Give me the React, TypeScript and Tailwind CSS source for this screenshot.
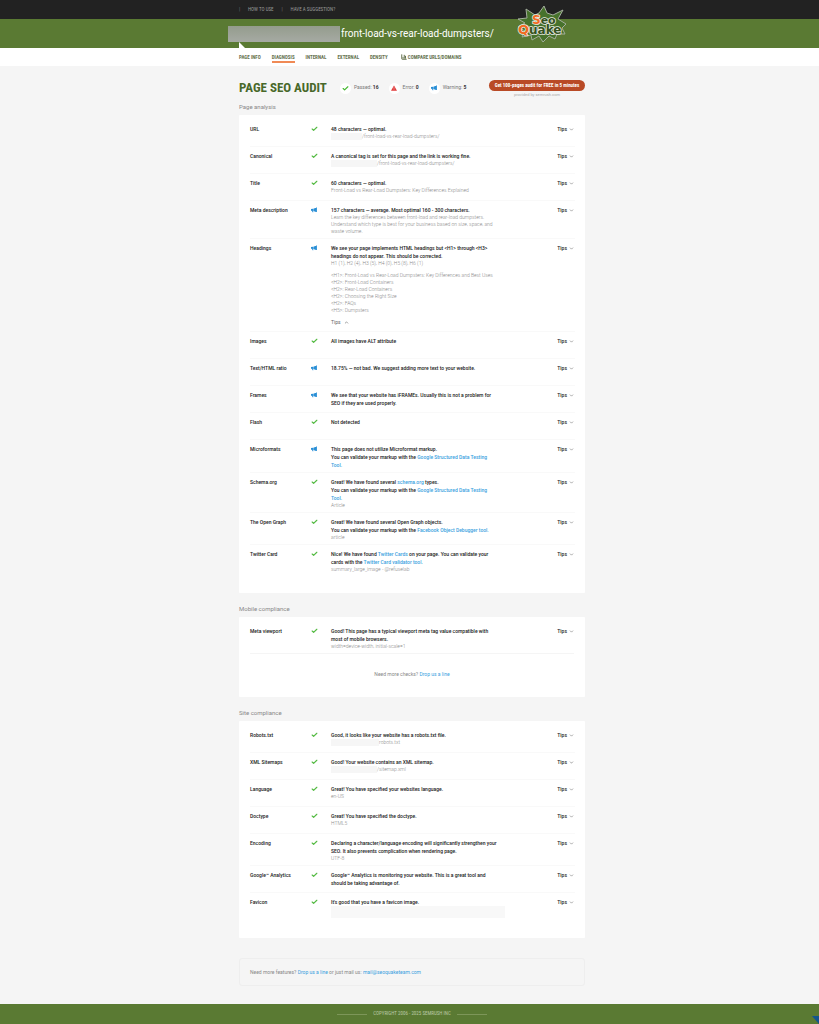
import type { ReactNode } from "react";
import { BarChart3, Check, ChevronDown, ChevronUp } from "lucide-react";

type Status = "pass" | "warning";

interface AuditItem {
  name: string;
  status: Status;
  message: ReactNode;
  details?: ReactNode;
}

const NAV = ["Page info", "Diagnosis", "Internal", "External", "Density"];

function Megaphone({ className }: { className: string }) {
  return (
    <svg viewBox="0 0 12 10" className={className} fill="#2a8fd6" aria-hidden="true">
      <path d="M0 3 L4 2.4 V7 L0 6.4 Z M4.6 2.6 L10 0.4 V8.8 L4.6 7 Z M10 0.2 H11.8 V9 H10 Z M2 7 H4.2 L4.8 9.6 H3 Z" />
    </svg>
  );
}

function StatusIcon({ status }: { status: Status }) {
  if (status === "pass") {
    return <Check className="w-[7px] h-2 text-[#55bb44]" strokeWidth={4} />;
  }
  return <Megaphone className="w-[6px] h-2" />;
}

function Blue({ children }: { children: ReactNode }) {
  return (
    <a href="#" className="text-[#3b9fe0]">
      {children}
    </a>
  );
}

// Hidden part of an address
function Mask({ className }: { className: string }) {
  return <span className={`inline-block h-[7px] align-top bg-[#f6f6f6] ${className}`} />;
}

const PAGE_ITEMS: AuditItem[] = [
  {
    name: "URL",
    status: "pass",
    message: "48 characters — optimal.",
    details: (
      <>
        <Mask className="w-[31px]" />
        /front-load-vs-rear-load-dumpsters/
      </>
    ),
  },
  {
    name: "Canonical",
    status: "pass",
    message: "A canonical tag is set for this page and the link is working fine.",
    details: (
      <>
        <Mask className="w-[46px]" />
        /front-load-vs-rear-load-dumpsters/
      </>
    ),
  },
  {
    name: "Title",
    status: "pass",
    message: "60 characters — optimal.",
    details: "Front-Load vs Rear-Load Dumpsters: Key Differences Explained",
  },
  {
    name: "Meta description",
    status: "warning",
    message: "157 characters — average. Most optimal 160 - 300 characters.",
    details: (
      <>
        Learn the key differences between front-load and rear-load dumpsters.
        <br />
        Understand which type is best for your business based on size, space, and
        <br />
        waste volume.
      </>
    ),
  },
  {
    name: "Headings",
    status: "warning",
    message: (
      <>
        We see your page implements HTML headings but &lt;H1&gt; through &lt;H3&gt;
        <br />
        headings do not appear. This should be corrected.
      </>
    ),
    details: (
      <>
        <p>H1 (1), H2 (4), H3 (5), H4 (0), H5 (8), H6 (1)</p>
        <ul className="mt-[5px]">
          <li>&lt;H1&gt;: Front-Load vs Rear-Load Dumpsters: Key Differences and Best Uses</li>
          <li>&lt;H2&gt;: Front-Load Containers</li>
          <li>&lt;H2&gt;: Rear-Load Containers</li>
          <li>&lt;H2&gt;: Choosing the Right Size</li>
          <li>&lt;H2&gt;: FAQs</li>
          <li>&lt;H5&gt;: Dumpsters</li>
        </ul>
        <button className="flex items-center gap-[3px] mt-1 mb-[2px] text-[5px] leading-2 font-normal text-[#666]">
          Tips
          <ChevronUp className="w-[5px] h-[5px]" strokeWidth={3} />
        </button>
      </>
    ),
  },
  { name: "Images", status: "pass", message: "All images have ALT attribute" },
  {
    name: "Text/HTML ratio",
    status: "warning",
    message: "18.75% — not bad. We suggest adding more text to your website.",
  },
  {
    name: "Frames",
    status: "warning",
    message: (
      <>
        We see that your website has iFRAMEs. Usually this is not a problem for
        <br />
        SEO if they are used properly.
      </>
    ),
  },
  { name: "Flash", status: "pass", message: "Not detected" },
  {
    name: "Microformats",
    status: "warning",
    message: (
      <>
        This page does not utilize Microformat markup.
        <br />
        You can validate your markup with the{" "}
        <Blue>
          Google Structured Data Testing
          <br />
          Tool.
        </Blue>
      </>
    ),
  },
  {
    name: "Schema.org",
    status: "pass",
    message: (
      <>
        Great! We have found several <Blue>schema.org</Blue> types.
        <br />
        You can validate your markup with the{" "}
        <Blue>
          Google Structured Data Testing
          <br />
          Tool.
        </Blue>
      </>
    ),
    details: "Article",
  },
  {
    name: "The Open Graph",
    status: "pass",
    message: (
      <>
        Great! We have found several Open Graph objects.
        <br />
        You can validate your markup with the <Blue>Facebook Object Debugger tool.</Blue>
      </>
    ),
    details: "article",
  },
  {
    name: "Twitter Card",
    status: "pass",
    message: (
      <>
        Nice! We have found <Blue>Twitter Cards</Blue> on your page. You can validate your
        <br />
        cards with the <Blue>Twitter Card validator tool.</Blue>
      </>
    ),
    details: "summary_large_image - @refuselab",
  },
];

const MOBILE_ITEMS: AuditItem[] = [
  {
    name: "Meta viewport",
    status: "pass",
    message: (
      <>
        Good! This page has a typical viewport meta tag value compatible with
        <br />
        most of mobile browsers.
      </>
    ),
    details: "width=device-width, initial-scale=1",
  },
];

const SITE_ITEMS: AuditItem[] = [
  {
    name: "Robots.txt",
    status: "pass",
    message: "Good, it looks like your website has a robots.txt file.",
    details: (
      <>
        <Mask className="w-12" />
        robots.txt
      </>
    ),
  },
  {
    name: "XML Sitemaps",
    status: "pass",
    message: "Good! Your website contains an XML sitemap.",
    details: (
      <>
        <Mask className="w-[46px]" />
        /sitemap.xml
      </>
    ),
  },
  {
    name: "Language",
    status: "pass",
    message: "Great! You have specified your websites language.",
    details: "en-US",
  },
  {
    name: "Doctype",
    status: "pass",
    message: "Great! You have specified the doctype.",
    details: "HTML5",
  },
  {
    name: "Encoding",
    status: "pass",
    message: (
      <>
        Declaring a character/language encoding will significantly strengthen your
        <br />
        SEO. It also prevents complication when rendering page.
      </>
    ),
    details: "UTF-8",
  },
  {
    name: "Google™ Analytics",
    status: "pass",
    message: (
      <>
        Google™ Analytics is monitoring your website. This is a great tool and
        <br />
        should be taking advantage of.
      </>
    ),
  },
  {
    name: "Favicon",
    status: "pass",
    message: "It's good that you have a favicon image.",
    details: <div className="h-3 w-[174px] bg-[#f8f8f8]" />,
  },
];

function AuditRow({ item }: { item: AuditItem }) {
  return (
    <li className="grid grid-cols-[61px_20px_1fr_auto] min-h-[27px] ml-[11px] mr-[10px] pt-[5px] pb-[3px] border-t border-[#f9f9f9] first:border-transparent text-[5px] leading-2 font-medium text-[#222]">
      <h3>{item.name}</h3>
      <StatusIcon status={item.status} />
      <div className="whitespace-nowrap">
        <p>{item.message}</p>
        {item.details && (
          <div className="text-[5px] leading-[7px] font-light text-[#888]">{item.details}</div>
        )}
      </div>
      <button className="flex items-center gap-[2px] self-start mr-px">
        Tips
        <ChevronDown className="w-[5px] h-[5px] text-[#777]" strokeWidth={3} />
      </button>
    </li>
  );
}

function AuditSection({
  title,
  items,
  children,
}: {
  title: string;
  items: AuditItem[];
  children?: ReactNode;
}) {
  return (
    <section className="mb-3">
      <h2 className="text-[6px] leading-2 pb-1 text-[#888]">{title}</h2>
      <div className="bg-white pt-1 pb-[17px] rounded-[1px]">
        <ul>
          {items.map((item) => (
            <AuditRow key={item.name} item={item} />
          ))}
        </ul>
        {children}
      </div>
    </section>
  );
}

function Logo() {
  return (
    <svg viewBox="0 0 50 38" className="w-[50px] h-[38px]" role="img" aria-label="SeoQuake">
      <path
        d="M9 4 L18 10 L22 8 L27 1 L30 8 L36 10 L46 5 L41 14 L49 19 L45 23 L48 29 L40 29 L38 34 L32 31 L26 37 L22 31 L15 35 L14 30 L5 32 L8 26 L1 22 L8 18 L1 14 L10 13 Z"
        fill="#47722c"
        stroke="#a3ad9c"
        strokeWidth="1"
        strokeLinejoin="round"
      />
      <g
        fontFamily="DejaVu Sans, sans-serif"
        fontWeight="700"
        fill="#35521f"
        stroke="#e9ebe2"
        strokeWidth="1.6"
        strokeLinejoin="round"
        paintOrder="stroke"
      >
        <text x="15" y="19" fontSize="11">
          <tspan fill="#f26a21" fontSize="12">S</tspan>eo
        </text>
        <text x="1" y="29" fontSize="12">
          <tspan fill="#f26a21" fontSize="13">Q</tspan>uake
        </text>
      </g>
    </svg>
  );
}

export default function App() {
  return (
    <div className="min-h-screen flex flex-col bg-[#f5f5f5] font-['Roboto',sans-serif]">
      <header>
        <div className="bg-[#222] h-[19px] pl-[5px]">
          <div className="max-w-[346px] mx-auto h-full flex items-center text-[5px] text-[#999] uppercase font-['Roboto_Condensed','Liberation_Sans_Narrow',sans-serif]">
            <span className="w-[9px] text-[#777]">|</span>
            <a href="#">How to use</a>
            <span className="w-[17px] text-center text-[#777]">|</span>
            <a href="#">Have a suggestion?</a>
          </div>
        </div>
        <div className="bg-[#5a7a33] h-[29px] pl-[5px]">
          <div className="relative max-w-[346px] mx-auto h-full flex items-center">
            <div className="w-[112px] h-4 -ml-[11px] bg-linear-to-b from-[#949c8d] to-[#a6aaa3]" />
            <h1 className="text-[10px] text-white pl-px">
              front-load-vs-rear-load-dumpsters/
            </h1>
            <svg viewBox="0 0 6 6" className="absolute left-0 bottom-0 w-[6px] h-[6px]" aria-hidden="true">
              <path d="M0 0 L6 6 H0 Z" fill="#fff" />
            </svg>
            <a href="#" className="absolute right-[18px] -top-[14px]">
              <Logo />
            </a>
          </div>
        </div>
        <nav className="bg-white h-[18px] pl-[5px]">
          <div className="max-w-[346px] mx-auto h-full flex items-center gap-[11px] text-[5px] leading-2 font-bold text-[#66734f] uppercase font-['Roboto_Condensed','Liberation_Sans_Narrow',sans-serif]">
            {NAV.map((label) => (
              <a
                key={label}
                href="#"
                className={
                  label === "Diagnosis"
                    ? "border-b-2 border-b-[#f08a55] pt-[2px]"
                    : "border-b-2 border-b-transparent pt-[2px]"
                }
              >
                {label}
              </a>
            ))}
            <a href="#" className="flex items-center gap-px ml-[2px]">
              <BarChart3 className="w-[6px] h-[6px]" strokeWidth={4} />
              Compare URLs/Domains
            </a>
          </div>
        </nav>
      </header>

      <main className="grow pl-[5px]">
        <div className="max-w-[346px] mx-auto pt-[14px]">
          <div className="flex items-start mb-[5px]">
            <h1 className="text-[13px] leading-4 font-bold text-[#48682a] uppercase font-['Roboto_Condensed','Liberation_Sans_Narrow',sans-serif]">
              Page SEO Audit
            </h1>
            <ul className="flex items-center gap-[10px] h-4 ml-[13px] text-[5px] text-[#777]">
              <li className="flex items-center gap-[3px]">
                <span className="w-[11px] h-[11px] rounded-full bg-white flex items-center justify-center">
                  <Check className="w-[7px] h-[7px] text-[#45b830]" strokeWidth={4} />
                </span>
                <span>
                  Passed: <b className="text-[#333]">16</b>
                </span>
              </li>
              <li className="flex items-center gap-[3px]">
                <span className="w-[11px] h-[11px] rounded-full bg-white flex items-center justify-center">
                  <svg viewBox="0 0 8 7" className="w-[6px] h-[6px]" aria-hidden="true">
                    <path d="M4 0 L8 7 H0 Z" fill="#e03a3a" />
                    <path d="M4 2.4 V4.6 M4 5.2 V6" stroke="#fff" strokeWidth=".6" />
                  </svg>
                </span>
                <span>
                  Error: <b className="text-[#333]">0</b>
                </span>
              </li>
              <li className="flex items-center gap-[3px]">
                <span className="w-[11px] h-[11px] rounded-full bg-white flex items-center justify-center">
                  <Megaphone className="w-[6px] h-[6px]" />
                </span>
                <span>
                  Warning: <b className="text-[#333]">5</b>
                </span>
              </li>
            </ul>
            <div className="ml-auto text-center">
              <button className="block w-24 h-[11px] rounded-full bg-[#b94a26] text-white text-[5px] leading-[11px] font-bold whitespace-nowrap font-['Roboto_Condensed','Liberation_Sans_Narrow',sans-serif]">
                Get 100-pages audit for FREE in 5 minutes
              </button>
              <p className="text-[4px] leading-[7px] text-[#aaa]">
                provided by semrush.com
              </p>
            </div>
          </div>

          <AuditSection title="Page analysis" items={PAGE_ITEMS} />
          <AuditSection title="Mobile compliance" items={MOBILE_ITEMS}>
            <p className="mx-[11px] border-t border-[#f5f5f5] pt-4 pb-[2px] text-center text-[5px] leading-2 text-[#888]">
              Need more checks? <Blue>Drop us a line</Blue>
            </p>
          </AuditSection>
          <AuditSection title="Site compliance" items={SITE_ITEMS} />

          <p className="mt-5 mb-[18px] px-[10px] py-[9px] border border-[#eee] rounded-[3px] text-[5px] leading-2 text-[#888]">
            Need more features? <Blue>Drop us a line</Blue> or just mail us:{" "}
            <a href="mailto:mail@seoquaketeam.com" className="text-[#3b9fe0]">
              mail@seoquaketeam.com
            </a>
          </p>
        </div>
      </main>

      <footer className="relative bg-[#5a7a33] h-5 pl-[5px] flex items-center justify-center gap-[6px] text-[5px] text-[#bac9a6] uppercase font-['Roboto_Condensed','Liberation_Sans_Narrow',sans-serif]">
        <span className="w-[30px] border-t border-[#7d9659]" />
        Copyright 2006 - 2025 Semrush Inc
        <span className="w-[30px] border-t border-[#7d9659]" />
        <svg viewBox="0 0 7 8" className="absolute right-0 bottom-0 w-[7px] h-2" aria-hidden="true">
          <path d="M0 0 H7 V8 Z" fill="#13558f" />
        </svg>
      </footer>
    </div>
  );
}
